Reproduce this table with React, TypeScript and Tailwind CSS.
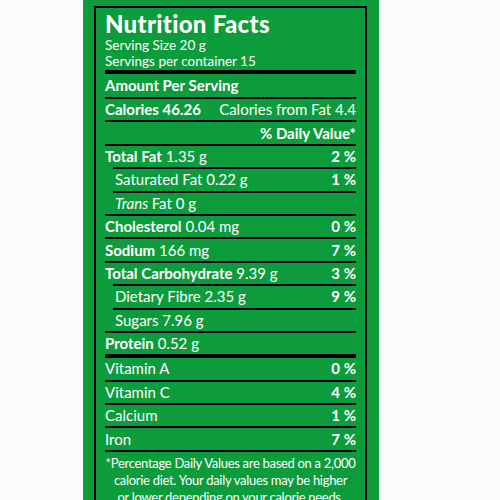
import React from 'react';

type RowProps = {
  label: string;
  amount?: string;
  pct?: string;
  bold?: boolean;
  sub?: boolean;
  italic?: string;
};

const Row: React.FC<RowProps> = ({label, amount, pct, bold, sub, italic}) => (
  <div className={`flex h-[21.4px] items-center justify-between ${sub ? 'pl-[10px]' : ''}`}>
    <span>
      {italic && <span className="italic">{italic} </span>}
      <span className={bold ? 'font-bold' : ''}>{label}</span>
      {amount && <span> {amount}</span>}
    </span>
    {pct && <span className="font-bold">{pct}</span>}
  </div>
);

const Line: React.FC<{indent?: boolean; thick?: boolean}> = ({indent, thick}) => (
  <div className={`${thick ? 'h-[4px]' : 'h-[2px]'} bg-black ${indent ? 'ml-[8px]' : ''}`} />
);

export default function App() {
  return (
    <div className="h-[500px] w-[500px] overflow-hidden bg-[#fbfbfd]">
      <div className="ml-[83px] h-[500px] w-[296px] bg-[#0c9c3c] pt-[6px] pl-[11px] text-white [font-family:Lato,'Liberation_Sans',sans-serif]">
        <div className="h-[494px] w-[273px] border-x-2 border-t-2 border-black px-[9px] text-[15px] leading-none">
          <div className="pt-[3px] pb-[1px]">
            <div className="text-[24px] font-black leading-[26px] tracking-[0.3px]">Nutrition Facts</div>
            <div className="text-[13.5px] leading-[16px]">Serving Size 20 g</div>
            <div className="text-[13.5px] leading-[16px]">Servings per container 15</div>
          </div>
          <Line thick />
          <div className="flex h-[23px] items-center font-bold">Amount Per Serving</div>
          <Line />
          <div className="flex h-[21.4px] items-center justify-between">
            <span className="font-bold">Calories 46.26</span>
            <span>Calories from Fat 4.4</span>
          </div>
          <Line />
          <div className="flex h-[21.4px] items-center justify-end font-bold">% Daily Value*</div>
          <Line />
          <Row label="Total Fat" amount="1.35 g" pct="2 %" bold />
          <Line indent />
          <Row label="Saturated Fat 0.22 g" pct="1 %" sub />
          <Line indent />
          <Row italic="Trans" label="Fat 0 g" sub />
          <Line />
          <Row label="Cholesterol" amount="0.04 mg" pct="0 %" bold />
          <Line />
          <Row label="Sodium" amount="166 mg" pct="7 %" bold />
          <Line />
          <Row label="Total Carbohydrate" amount="9.39 g" pct="3 %" bold />
          <Line indent />
          <Row label="Dietary Fibre 2.35 g" pct="9 %" sub />
          <Line indent />
          <Row label="Sugars 7.96 g" sub />
          <Line />
          <Row label="Protein" amount="0.52 g" bold />
          <Line thick />
          <Row label="Vitamin A" pct="0 %" />
          <Line />
          <Row label="Vitamin C" pct="4 %" />
          <Line />
          <Row label="Calcium" pct="1 %" />
          <Line />
          <Row label="Iron" pct="7 %" />
          <Line />
          <p className="-mx-[4px] pt-[3px] text-center text-[13px] leading-[17px] tracking-[-0.3px] whitespace-nowrap">
            *Percentage Daily Values are based on a 2,000
            <br />
            calorie diet. Your daily values may be higher
            <br />
            or lower depending on your calorie needs.
          </p>
        </div>
      </div>
    </div>
  );
}
